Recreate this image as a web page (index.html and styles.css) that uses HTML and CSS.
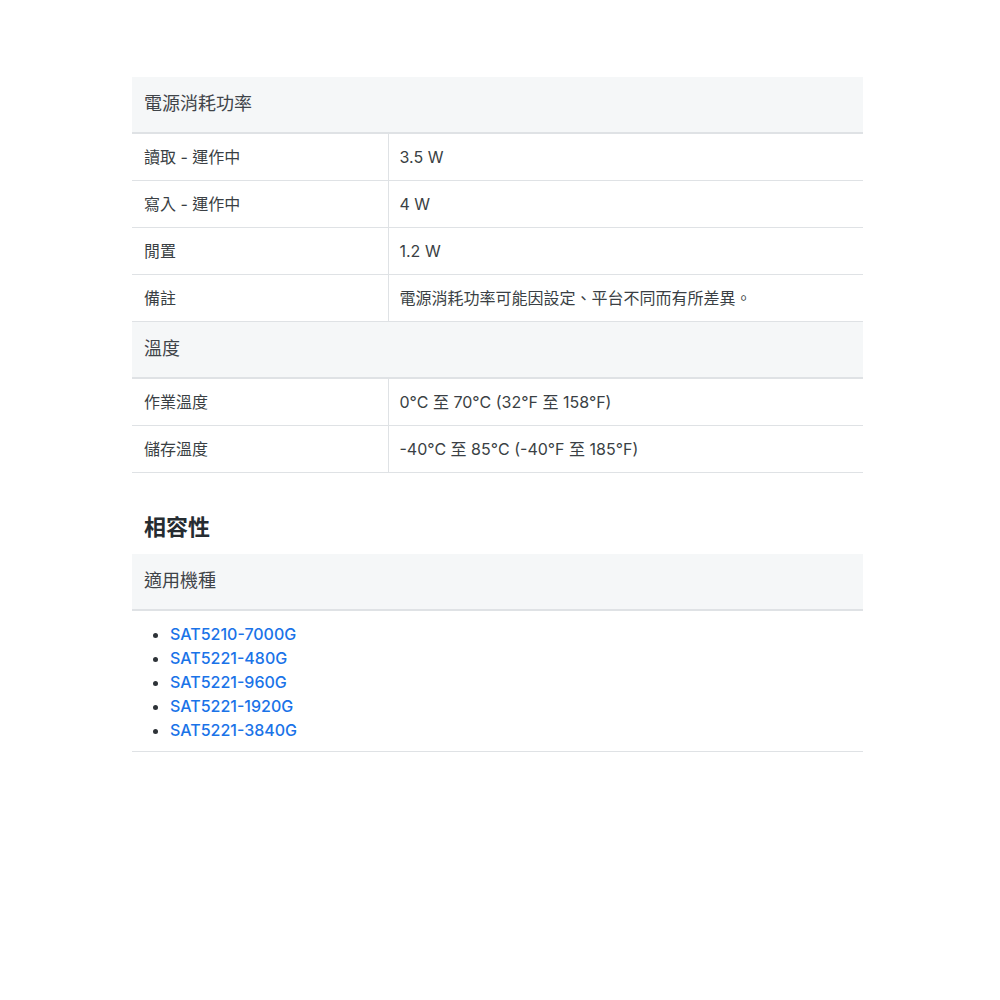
FILE: index.html
```html
<!DOCTYPE html>
<html lang="zh-Hant">
<head>
<meta charset="utf-8">
<link rel="stylesheet" href="styles.css">
</head>
<body>
<main class="page">
  <table class="spec">
    <colgroup><col class="col-label"><col class="col-value"></colgroup>
    <tbody>
      <tr class="group"><th colspan="2">電源消耗功率</th></tr>
      <tr><td class="label">讀取 - 運作中</td><td>3.5 W</td></tr>
      <tr><td class="label">寫入 - 運作中</td><td>4 W</td></tr>
      <tr><td class="label">閒置</td><td>1.2 W</td></tr>
      <tr><td class="label">備註</td><td>電源消耗功率可能因設定、平台不同而有所差異。</td></tr>
      <tr class="group"><th colspan="2">溫度</th></tr>
      <tr><td class="label">作業溫度</td><td>0°C 至 70°C (32°F 至 158°F)</td></tr>
      <tr><td class="label">儲存溫度</td><td>-40°C 至 85°C (-40°F 至 185°F)</td></tr>
    </tbody>
  </table>

  <h2 class="section-title">相容性</h2>

  <table class="spec">
    <tbody>
      <tr class="group"><th>適用機種</th></tr>
      <tr>
        <td class="list-cell">
          <ul class="models">
            <li><a href="#">SAT5210-7000G</a></li>
            <li><a href="#">SAT5221-480G</a></li>
            <li><a href="#">SAT5221-960G</a></li>
            <li><a href="#">SAT5221-1920G</a></li>
            <li><a href="#">SAT5221-3840G</a></li>
          </ul>
        </td>
      </tr>
    </tbody>
  </table>
</main>
</body>
</html>
```
FILE: styles.css
```css
* { box-sizing: border-box; }
html, body { margin: 0; padding: 0; background: #fff; }
body {
  font-family: "Inter", "Noto Sans CJK TC", sans-serif;
  color: #3a3f44;
}
.page {
  width: 731px;
  margin: 77px 0 0 132px;
}
.spec {
  width: 100%;
  border-collapse: collapse;
  table-layout: fixed;
}
.col-label { width: 256px; }
.spec th {
  background: #f5f7f8;
  text-align: left;
  font-weight: 400;
  font-size: 18px;
  line-height: 26px;
  padding: 14px 12px 15px 12px;
  border-bottom: 2px solid #dfe2e5;
  color: #3f4449;
}
.spec td {
  font-size: 16px;
  line-height: 22px;
  padding: 12px 11px 12px 11px;
  border-bottom: 1px solid #dfe2e5;
  vertical-align: top;
}
.spec td.label {
  padding-left: 12px;
  border-right: 1px solid #dfe2e5;
}
.section-title {
  font-size: 22px;
  line-height: 30px;
  font-weight: 700;
  margin: 39px 0 0 0;
  padding: 0 12px 12px 12px;
  color: #262c31;
}
.spec td.list-cell {
  padding: 11px 12px 9px 0;
}
.models {
  margin: 0;
  padding-left: 38px;
}
.models li {
  font-size: 16px;
  line-height: 24px;
  font-weight: 500;
}
.models li::marker { color: #2e3338; }
.models a {
  color: #1a73e8;
  text-decoration: none;
}
```
